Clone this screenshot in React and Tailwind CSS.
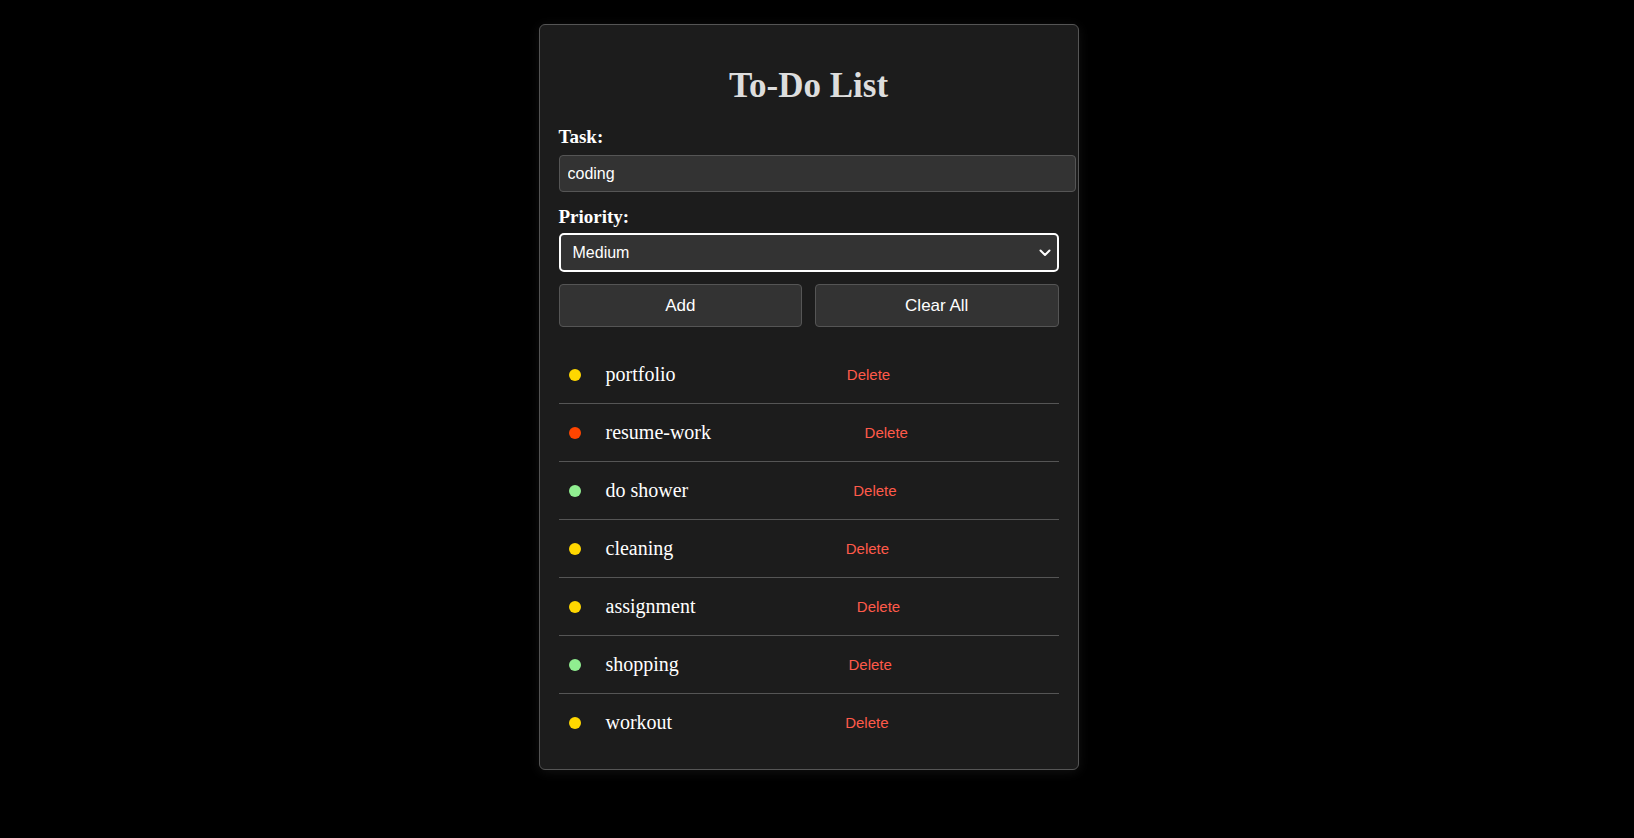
import React from "react";

const serif = { fontFamily: '"Liberation Serif", "Times New Roman", serif' };
const sans = { fontFamily: '"Liberation Sans", Arial, sans-serif' };

const tasks = [
  { name: "portfolio", color: "bg-[#ffd700]" },
  { name: "resume-work", color: "bg-[#ff4500]" },
  { name: "do shower", color: "bg-[#90ee90]" },
  { name: "cleaning", color: "bg-[#ffd700]" },
  { name: "assignment", color: "bg-[#ffd700]" },
  { name: "shopping", color: "bg-[#90ee90]" },
  { name: "workout", color: "bg-[#ffd700]" },
];

export default function App() {
  return (
    <div className="min-h-screen bg-black flex justify-center items-start pr-[17px] pt-[24px]">
      <div className="w-[540px] bg-[#1c1c1c] border border-[#555] rounded-[6px] px-[19px] pt-[20px] pb-[18px] shadow-[0_2px_12px_rgba(255,255,255,0.07)]">
        <h1
          className="text-center text-[35px] leading-[38px] font-bold text-[#dddddd] mt-[22px] mb-[21px]"
          style={serif}
        >
          To-Do List
        </h1>
        <label className="block text-[19px] leading-[21px] font-bold text-white mb-[8px]" style={serif}>
          Task:
        </label>
        <input
          readOnly
          value="coding"
          className="block w-[517px] h-[37px] bg-[#333] border border-[#555] rounded-[4px] pl-[8px] text-[16px] text-white outline-none mb-[14px]"
          style={sans}
        />
        <label className="block text-[19px] leading-[21px] font-bold text-white mb-[6px]" style={serif}>
          Priority:
        </label>
        <div className="relative">
          <select
            defaultValue="Medium"
            className="block w-full h-[39px] appearance-none bg-[#333] border-2 border-white rounded-[5px] pl-[12px] text-[16px] text-white outline-none"
            style={sans}
          >
            <option>Low</option>
            <option>Medium</option>
            <option>High</option>
          </select>
          <svg
            className="absolute right-[8px] top-[16px] pointer-events-none"
            width="12"
            height="8"
            viewBox="0 0 12 8"
            fill="none"
          >
            <path d="M1.5 1.5 L6 6 L10.5 1.5" stroke="white" strokeWidth="2" strokeLinecap="round" strokeLinejoin="round" />
          </svg>
        </div>
        <div className="flex gap-[13px] mt-[12px]">
          <button
            className="flex-1 h-[43px] bg-[#333] border border-[#555] rounded-[4px] text-[17px] text-white"
            style={sans}
          >
            Add
          </button>
          <button
            className="flex-1 h-[43px] bg-[#333] border border-[#555] rounded-[4px] text-[17px] text-white"
            style={sans}
          >
            Clear All
          </button>
        </div>
        <ul className="mt-[19px]">
          {tasks.map((t, i) => (
            <li
              key={t.name}
              className={
                "flex items-center " +
                (i < tasks.length - 1 ? "h-[58px] border-b border-[#555]" : "h-[57px]")
              }
            >
              <div className="grow flex items-center pl-[10px]">
                <span className={"w-[12px] h-[12px] rounded-full mr-[25px] " + t.color}></span>
                <span className="text-[20px] leading-[23px] text-white" style={serif}>
                  {t.name}
                </span>
              </div>
              <button
                className="grow text-left pl-[3px] text-[15px] leading-[18px] text-[#ff5a4a]"
                style={sans}
              >
                Delete
              </button>
            </li>
          ))}
        </ul>
      </div>
    </div>
  );
}
